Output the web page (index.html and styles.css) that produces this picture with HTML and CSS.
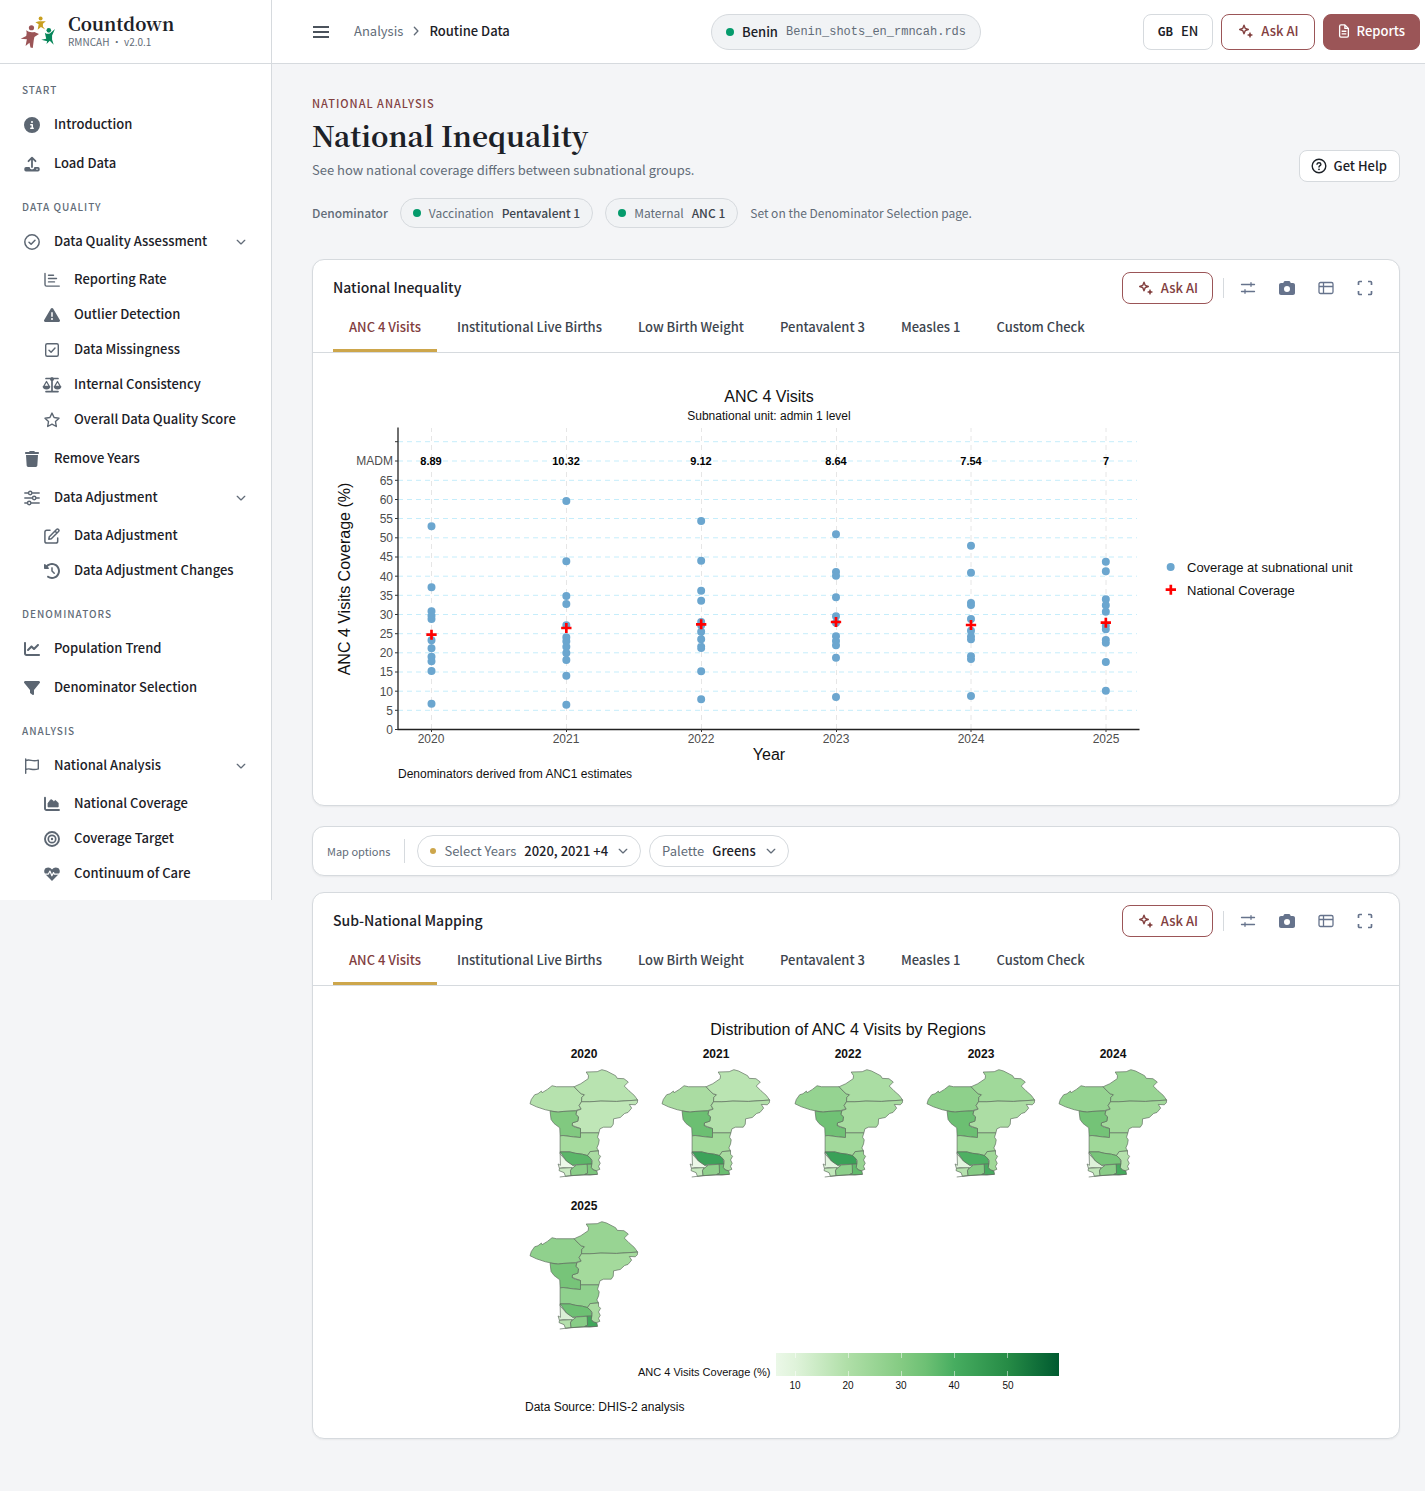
FILE: index.html
```html
<!DOCTYPE html>
<html lang="en">
<head>
<meta charset="utf-8">
<meta name="viewport" content="width=device-width, initial-scale=1">
<title>Countdown – National Inequality</title>
<link rel="stylesheet" href="styles.css">
</head>
<body>

<!-- Icon sprite -->
<svg class="sprite" aria-hidden="true">
  <symbol id="i-info" viewBox="0 0 512 512"><path d="M256 512A256 256 0 1 0 256 0a256 256 0 1 0 0 512zM216 336h24V272H216c-13.3 0-24-10.7-24-24s10.7-24 24-24h48c13.3 0 24 10.7 24 24v88h8c13.3 0 24 10.7 24 24s-10.7 24-24 24H216c-13.3 0-24-10.7-24-24s10.7-24 24-24zm40-208a32 32 0 1 1 0 64 32 32 0 1 1 0-64z"/></symbol>
  <symbol id="i-upload" viewBox="0 0 16 16"><path d="M2 11h3.6a2.4 2.4 0 0 0 4.8 0H14a1.7 1.7 0 0 1 1.7 1.7v1A1.7 1.7 0 0 1 14 15.400H2a1.700 1.700 0 0 1-1.700-1.700v-1A1.700 1.700 0 0 1 2 11z"/><path d="M8 11V2M4.500 5.200L8 1.700l3.500 3.500" fill="none" stroke="currentColor" stroke-width="1.800" stroke-linecap="round" stroke-linejoin="round"/><circle cx="13" cy="13.200" r=".7" fill="#fff"/></symbol>
  <symbol id="i-check-circle" viewBox="0 0 16 16"><g fill="none" stroke="currentColor" stroke-width="1.500" stroke-linecap="round" stroke-linejoin="round"><circle cx="8" cy="8" r="7.200"/><path d="M5 8.200l2.100 2.100L11 6.200"/></g></symbol>
  <symbol id="i-bars-chart" viewBox="0 0 16 16"><path d="M1 1.500v11a1.600 1.600 0 0 0 1.600 1.600H15.300M4.500 3.200h5M4.500 6.500h8M4.500 9.900h6" fill="none" stroke="currentColor" stroke-width="1.400" stroke-linecap="round"/></symbol>
  <symbol id="i-warn" viewBox="0 0 512 512"><path d="M256 32c14.200 0 27.300 7.500 34.500 19.800l216 368c7.300 12.400 7.300 27.700 .2 40.100S486.300 480 472 480H40c-14.300 0-27.600-7.700-34.700-20.100s-7-27.800 .2-40.100l216-368C228.700 39.500 241.800 32 256 32zm0 128c-13.300 0-24 10.700-24 24V296c0 13.300 10.700 24 24 24s24-10.700 24-24V184c0-13.300-10.700-24-24-24zm32 224a32 32 0 1 0 -64 0 32 32 0 1 0 64 0z"/></symbol>
  <symbol id="i-check-square" viewBox="0 0 16 16"><g fill="none" stroke="currentColor" stroke-width="1.400" stroke-linecap="round" stroke-linejoin="round"><rect x="1.700" y="1.700" width="12.600" height="12.600" rx="1.500"/><path d="M5 8.200l2.100 2.100L11 6"/></g></symbol>
  <symbol id="i-scale" viewBox="0 0 20 16"><path d="M4 1.500h12M10 1v13.500M4 14.600h12" fill="none" stroke="currentColor" stroke-width="1.700" stroke-linecap="round"/><circle cx="10" cy="2.200" r="1.900"/><path d="M4.500 4.500L1.600 9.500h5.800zM15.500 4.500l-2.900 5h5.800z" fill="none" stroke="currentColor" stroke-width="1.300" stroke-linejoin="round"/><path d="M.6 9.300h7.800a3.900 3.100 0 0 1-7.800 0zM11.600 9.300h7.800a3.900 3.100 0 0 1-7.800 0z"/></symbol>
  <symbol id="i-star" viewBox="0 0 16 16"><path d="M8 1.100l2.100 4.400 4.900.7-3.500 3.400.8 4.900L8 12.200l-4.300 2.300.8-4.900L1 6.200l4.900-.7z" fill="none" stroke="currentColor" stroke-width="1.400" stroke-linejoin="round"/></symbol>
  <symbol id="i-trash" viewBox="-32 0 512 512"><path d="M135.200 17.700L128 32H32C14.300 32 0 46.300 0 64S14.300 96 32 96H416c17.700 0 32-14.300 32-32s-14.300-32-32-32H320l-7.200-14.300C307.400 6.800 296.300 0 284.200 0H163.800c-12.100 0-23.200 6.800-28.600 17.700zM416 128H32L53.200 467c1.600 25.300 22.600 45 47.900 45H346.900c25.300 0 46.300-19.700 47.900-45L416 128z"/></symbol>
  <symbol id="i-sliders" viewBox="0 0 16 16"><g fill="none" stroke="currentColor" stroke-width="1.400" stroke-linecap="round"><path d="M.8 3h3.400M8.200 3h7M.8 8h7.400M12.200 8h3M.8 13h2.400M7.200 13h8"/><circle cx="6.200" cy="3" r="1.700"/><circle cx="10.200" cy="8" r="1.700"/><circle cx="5.200" cy="13" r="1.700"/></g></symbol>
  <symbol id="i-edit" viewBox="0 0 16 16"><g fill="none" stroke="currentColor" stroke-width="1.500" stroke-linecap="round" stroke-linejoin="round"><path d="M6 2.300H2.800A1.900 1.900 0 0 0 .9 4.200v9a1.900 1.900 0 0 0 1.900 1.900h9a1.900 1.900 0 0 0 1.900-1.900V10"/><path d="M5.300 8.700L12.500 1.500a1.400 1.400 0 0 1 2 2L7.300 10.700l-2.500.5zM11 3l2 2"/></g></symbol>
  <symbol id="i-history" viewBox="0 0 512 512"><path d="M75 75L41 41C25.900 25.900 0 36.600 0 57.900V168c0 13.300 10.700 24 24 24H134.100c21.400 0 32.100-25.900 17-41l-30.800-30.800C155 85.500 203 64 256 64c106 0 192 86 192 192s-86 192-192 192c-40.800 0-78.600-12.700-109.700-34.400c-14.500-10.100-34.400-6.600-44.600 7.900s-6.600 34.400 7.900 44.600C151.200 495 201.700 512 256 512c141.400 0 256-114.600 256-256S397.400 0 256 0C185.300 0 121.300 28.700 75 75zm181 53c-13.300 0-24 10.700-24 24V256c0 6.400 2.500 12.500 7 17l72 72c9.400 9.400 24.600 9.400 33.900 0s9.400-24.600 0-33.900l-65-65V152c0-13.300-10.700-24-24-24z"/></symbol>
  <symbol id="i-trend" viewBox="0 0 512 512"><path d="M64 64c0-17.700-14.300-32-32-32S0 46.300 0 64V400c0 44.200 35.800 80 80 80H480c17.700 0 32-14.300 32-32s-14.300-32-32-32H80c-8.800 0-16-7.200-16-16V64zm406.600 86.600c12.500-12.500 12.500-32.800 0-45.300s-32.800-12.500-45.300 0L320 210.700l-57.400-57.400c-12.500-12.500-32.800-12.500-45.300 0l-112 112c-12.500 12.500-12.500 32.800 0 45.300s32.800 12.500 45.300 0L240 221.300l57.400 57.400c12.500 12.500 32.800 12.500 45.300 0l128-128z"/></symbol>
  <symbol id="i-filter" viewBox="0 0 512 512"><path d="M3.900 54.900C10.500 40.900 24.500 32 40 32H472c15.500 0 29.500 8.900 36.100 22.900s4.600 30.500-5.200 42.500L320 320.900V448c0 12.100-6.800 23.200-17.700 28.600s-23.800 4.300-33.500-3l-64-48c-8.100-6-12.800-15.500-12.800-25.600V320.900L9 97.300C-.7 85.400-2.800 68.800 3.900 54.900z"/></symbol>
  <symbol id="i-flag" viewBox="0 0 16 16"><path d="M1.700 1v14.300M1.700 2.600c4.500-2 6.300 1.500 12.600-.5v8.800c-6.300 2.200-8.100-1.500-12.600.6" fill="none" stroke="currentColor" stroke-width="1.400" stroke-linecap="round" stroke-linejoin="round"/></symbol>
  <symbol id="i-area" viewBox="0 0 16 16"><path d="M1 1.800v10.700A1.500 1.500 0 0 0 2.500 14H15" fill="none" stroke="currentColor" stroke-width="1.900" stroke-linecap="round"/><path d="M4 10.900V7.300l2.600-3.500 1.500.1 1.700 1.700 1.800-1.200 2.600 2.600v3.900z" stroke="currentColor" stroke-width=".8" stroke-linejoin="round"/></symbol>
  <symbol id="i-target" viewBox="0 0 16 16"><g fill="none" stroke="currentColor"><circle cx="8" cy="8" r="7" stroke-width="1.900"/><circle cx="8" cy="8" r="3.700" stroke-width="1.700"/></g><circle cx="8" cy="8" r="1.200"/></symbol>
  <symbol id="i-heart" viewBox="0 0 16 16"><path d="M8 14.900L1.600 8.600C-.4 6.500-.2 3.300 2 2c2-1.200 4.500-.6 6 1.500C9.500 1.400 12 .8 14 2c2.200 1.300 2.400 4.500.4 6.600z"/><path d="M0 8.100h4.400l1.500-3 2 4.700 1.600-3.200.8 1.500H16" fill="none" stroke="#fff" stroke-width="1.200" stroke-linejoin="round"/></symbol>
  <symbol id="i-chevron" viewBox="0 0 12 12"><path d="M1.500 4L6 8.300 10.500 4" fill="none" stroke="currentColor" stroke-width="1.600" stroke-linecap="round" stroke-linejoin="round"/></symbol>
  <symbol id="i-menu" viewBox="0 0 18 14"><path d="M1 2h16M1 7h16M1 12h16" stroke="currentColor" stroke-width="1.900"/></symbol>
  <symbol id="i-spark" viewBox="0 0 16 16"><path d="M6 2.200l1.200 3.100 3.100 1.200-3.100 1.200L6 10.800 4.800 7.700 1.700 6.500l3.100-1.200z" fill="none" stroke="currentColor" stroke-width="1.400" stroke-linejoin="round"/><path d="M12 8.800l1 2.200 2.200 1-2.200 1-1 2.200-1-2.200-2.200-1 2.200-1z"/></symbol>
  <symbol id="i-doc" viewBox="0 0 12 16"><path d="M1 2.500A1.500 1.500 0 0 1 2.500 1H7l4 4v8.500a1.500 1.500 0 0 1-1.500 1.500h-7A1.500 1.500 0 0 1 1 13.500zM7 1v4h4M3.300 8.300h5.400M3.300 11.300h5.400" fill="none" stroke="currentColor" stroke-width="1.500" stroke-linejoin="round"/></symbol>
  <symbol id="i-help" viewBox="0 0 16 16"><g fill="none" stroke="currentColor" stroke-width="1.400" stroke-linecap="round"><circle cx="8" cy="8" r="6.800"/><path d="M6 6.200C6.300 4.300 9.900 4.300 9.900 6.400 9.900 7.700 8 7.700 8 9"/></g><circle cx="8" cy="11.300" r=".9"/></symbol>
  <symbol id="i-tune" viewBox="0 0 16 16"><path d="M1.500 4.500h13M11 2.700v3.600M1.500 11.500h13M5 9.700v3.600" fill="none" stroke="currentColor" stroke-width="1.300" stroke-linecap="round"/></symbol>
  <symbol id="i-camera" viewBox="0 0 512 512"><path d="M149.100 64.800L138.700 96H64C28.700 96 0 124.700 0 160V416c0 35.300 28.700 64 64 64H448c35.300 0 64-28.700 64-64V160c0-35.300-28.700-64-64-64H373.300L362.900 64.800C356.400 45.200 338.100 32 317.400 32H194.600c-20.700 0-39 13.200-45.500 32.800zM256 192a96 96 0 1 1 0 192 96 96 0 1 1 0-192z"/></symbol>
  <symbol id="i-table" viewBox="0 0 16 16"><path d="M2.500 2.500h11a1.500 1.500 0 0 1 1.500 1.500v8a1.500 1.500 0 0 1-1.500 1.500h-11A1.500 1.500 0 0 1 1 12V4a1.500 1.500 0 0 1 1.500-1.500zM1 6.500h14M5.500 2.500v11" fill="none" stroke="currentColor" stroke-width="1.300"/></symbol>
  <symbol id="i-expand" viewBox="0 0 16 16"><path d="M1.500 5V2.500a1 1 0 0 1 1-1H5M11 1.500h2.500a1 1 0 0 1 1 1V5M14.500 11v2.500a1 1 0 0 1-1 1H11M5 14.500H2.500a1 1 0 0 1-1-1V11" fill="none" stroke="currentColor" stroke-width="1.700"/></symbol>

  <!-- Benin departments, filled from the custom properties of the year -->
  <symbol id="benin" viewBox="55 80 335 335">
    <g stroke="#5c6b5c" stroke-width="2" stroke-linejoin="round">
      <path fill="var(--atacora)" d="M61 190L65 177 75 163 85 160 95 152 97 157 113 147 127 136 140 139 193 139 205 152 214 160 224 163 216 171 215 184 208 195 214 206 206 207 197 211 160 213 145 215 127 212 107 208 80 199z"/>
      <path fill="var(--alibori)" d="M193 139L213 130 235 115 236 106 229 95 262 94 276 88 290 92 317 106 322 114 342 115 355 125 343 137 357 151 373 165 378 172 383 179 320 183 273 182 240 184 215 184 216 171 224 163 214 160 205 152z"/>
      <path fill="var(--borgou)" d="M215 184L240 184 273 182 320 183 383 179 382 187 376 193 358 192 365 203 354 216 344 219 331 231 311 235 310 251 304 260 281 260 270 265 267 277 212 277 212 264 196 258 187 255 188 247 204 242 206 229 198 222 201 211 214 206 208 195z"/>
      <path fill="var(--donga)" d="M121 212L145 215 160 213 201 211 198 222 206 229 204 242 188 247 187 255 196 260 212 264 212 291 190 289 160 285 151 286 150 262 133 249 124 237z"/>
      <path fill="var(--collines)" d="M151 286L160 285 190 289 212 291 212 277 267 277 263 290 268 298 266 310 261 322 266 331 241 333 233 345 218 341 196 338 180 334 151 334z"/>
      <path fill="var(--plateau)" d="M241 333L266 331 266 341 272 347 266 358 271 368 266 377 270 386 260 390 250 388 244 380 247 360 233 345z"/>
      <path fill="var(--couffo)" d="M151 334L151 340 170 361 189 374 200 374 194 380 187 383 160 381 149 383 145 370 152 374z"/>
      <path fill="var(--zou)" d="M151 334L180 334 196 338 218 341 233 345 244 355 246 370 200 372 189 374 170 361z"/>
      <path fill="var(--mono)" d="M149 383L187 381 182 390 184 405 167 407 163 396 148 390z"/>
      <path fill="var(--atlantique)" d="M187 383L200 373 232 371 235 385 233 398 226 400 224 402 184 405 182 390z"/>
      <path fill="var(--oueme)" d="M232 371L246 371 244 380 250 388 261 391 263 401 240 403 224 402 233 398z"/>
      <path fill="none" d="M150 409L184 405 224 403 263 401"/>
    </g>
  </symbol>
</svg>

<aside class="sidebar">
  <div class="brand">
    <svg class="brand-logo" viewBox="60 45 110 100" aria-hidden="true">
      <g fill="#9b5557"><circle cx="95" cy="82" r="8"/><path d="M79 90Q89 98 104 95L118 101 104 110 102 120 99 144 92 142 89 128 77 138 81 117 62 116 79 107Q82 99 79 90z"/></g>
      <g fill="#c9a020"><circle cx="123" cy="54" r="6"/><path d="M107 65L118 62 128 62 139 62 130 70 130 78 137 87 124 80 114 88 117 71z"/></g>
      <g fill="#07865a"><circle cx="148" cy="90" r="7"/><path d="M136 97Q144 103 152 99L167 86 158 106 158 118 163 134 151 122 141 132 143 123 125 119 140 116z"/></g>
    </svg>
    <div class="brand-text">
      <div class="brand-name">Countdown</div>
      <div class="brand-sub">RMNCAH · v2.0.1</div>
    </div>
  </div>
  <nav class="nav" aria-label="Main">
    <h2 class="nav-label">START</h2>
    <a class="nav-item" href="#"><svg class="icon"><use href="#i-info"/></svg><span>Introduction</span></a>
    <a class="nav-item" href="#"><svg class="icon"><use href="#i-upload"/></svg><span>Load Data</span></a>
    <h2 class="nav-label">DATA QUALITY</h2>
    <button class="nav-item" type="button" aria-expanded="true"><svg class="icon"><use href="#i-check-circle"/></svg><span>Data Quality Assessment</span><svg class="chevron"><use href="#i-chevron"/></svg></button>
    <div class="subnav">
      <a class="nav-item" href="#"><svg class="icon"><use href="#i-bars-chart"/></svg><span>Reporting Rate</span></a>
      <a class="nav-item" href="#"><svg class="icon"><use href="#i-warn"/></svg><span>Outlier Detection</span></a>
      <a class="nav-item" href="#"><svg class="icon"><use href="#i-check-square"/></svg><span>Data Missingness</span></a>
      <a class="nav-item" href="#"><svg class="icon icon-wide"><use href="#i-scale"/></svg><span>Internal Consistency</span></a>
      <a class="nav-item" href="#"><svg class="icon"><use href="#i-star"/></svg><span>Overall Data Quality Score</span></a>
    </div>
    <a class="nav-item" href="#"><svg class="icon"><use href="#i-trash"/></svg><span>Remove Years</span></a>
    <button class="nav-item" type="button" aria-expanded="true"><svg class="icon"><use href="#i-sliders"/></svg><span>Data Adjustment</span><svg class="chevron"><use href="#i-chevron"/></svg></button>
    <div class="subnav">
      <a class="nav-item" href="#"><svg class="icon"><use href="#i-edit"/></svg><span>Data Adjustment</span></a>
      <a class="nav-item" href="#"><svg class="icon"><use href="#i-history"/></svg><span>Data Adjustment Changes</span></a>
    </div>
    <h2 class="nav-label">DENOMINATORS</h2>
    <a class="nav-item" href="#"><svg class="icon"><use href="#i-trend"/></svg><span>Population Trend</span></a>
    <a class="nav-item" href="#"><svg class="icon"><use href="#i-filter"/></svg><span>Denominator Selection</span></a>
    <h2 class="nav-label">ANALYSIS</h2>
    <button class="nav-item" type="button" aria-expanded="true"><svg class="icon"><use href="#i-flag"/></svg><span>National Analysis</span><svg class="chevron"><use href="#i-chevron"/></svg></button>
    <div class="subnav">
      <a class="nav-item" href="#"><svg class="icon"><use href="#i-area"/></svg><span>National Coverage</span></a>
      <a class="nav-item" href="#"><svg class="icon"><use href="#i-target"/></svg><span>Coverage Target</span></a>
      <a class="nav-item" href="#"><svg class="icon"><use href="#i-heart"/></svg><span>Continuum of Care</span></a>
    </div>
  </nav>
</aside>

<div class="page">
  <header class="topbar">
    <div class="topbar-left">
      <button class="menu-btn" type="button" aria-label="Toggle menu"><svg><use href="#i-menu"/></svg></button>
      <nav class="crumbs" aria-label="Breadcrumb"><a href="#">Analysis</a><svg class="crumb-sep"><use href="#i-chevron"/></svg><strong>Routine Data</strong></nav>
    </div>
    <div class="dataset"><span class="dot"></span><strong>Benin</strong><span class="file">Benin_shots_en_rmncah.rds</span></div>
    <div class="topbar-right">
      <button class="btn" type="button"><span class="flag">GB</span>EN</button>
      <button class="btn btn-ai" type="button"><svg class="icon"><use href="#i-spark"/></svg>Ask AI</button>
      <button class="btn btn-solid" type="button"><svg class="icon icon-doc"><use href="#i-doc"/></svg>Reports</button>
    </div>
  </header>

  <main class="content">
    <div class="page-head">
      <div>
        <p class="eyebrow">NATIONAL ANALYSIS</p>
        <h1>National Inequality</h1>
        <p class="lead">See how national coverage differs between subnational groups.</p>
      </div>
      <button class="btn btn-help" type="button"><svg class="icon"><use href="#i-help"/></svg>Get Help</button>
    </div>
    <div class="denoms">
      <strong>Denominator</strong>
      <span class="chip"><span class="dot"></span>Vaccination <b>Pentavalent 1</b></span>
      <span class="chip"><span class="dot"></span>Maternal <b>ANC 1</b></span>
      <span>Set on the Denominator Selection page.</span>
    </div>

    <section class="card">
      <div class="card-head">
        <h2>National Inequality</h2>
        <div class="tools">
          <button class="btn btn-ai btn-small" type="button"><svg class="icon"><use href="#i-spark"/></svg>Ask AI</button>
          <span class="rule"></span>
          <button class="tool" type="button" aria-label="Settings"><svg><use href="#i-tune"/></svg></button>
          <button class="tool" type="button" aria-label="Download image"><svg><use href="#i-camera"/></svg></button>
          <button class="tool" type="button" aria-label="Show table"><svg><use href="#i-table"/></svg></button>
          <button class="tool" type="button" aria-label="Full screen"><svg><use href="#i-expand"/></svg></button>
        </div>
      </div>
      <div class="tabs" role="tablist">
        <button role="tab" aria-selected="true">ANC 4 Visits</button>
        <button role="tab" aria-selected="false">Institutional Live Births</button>
        <button role="tab" aria-selected="false">Low Birth Weight</button>
        <button role="tab" aria-selected="false">Pentavalent 3</button>
        <button role="tab" aria-selected="false">Measles 1</button>
        <button role="tab" aria-selected="false">Custom Check</button>
      </div>
      <svg class="plot" viewBox="313 353 1086 452" role="img" aria-label="ANC 4 Visits coverage by year">
        <g class="mid">
          <text class="t16" x="769" y="402">ANC 4 Visits</text>
          <text class="t12" x="769" y="420">Subnational unit: admin 1 level</text>
          <text class="t16" x="769" y="760">Year</text>
          <text class="t16" transform="translate(350 579) rotate(-90)">ANC 4 Visits Coverage (%)</text>
        </g>
        <path class="grid-h" d="M398 710.300H1137M398 691.200H1137M398 672H1137M398 652.800H1137M398 633.700H1137M398 614.500H1137M398 595.300H1137M398 576.200H1137M398 557H1137M398 537.800H1137M398 518.500H1137M398 499.500H1137M398 480.300H1137M398 461H1137M398 441.700H1137"/>
        <path class="grid-v" d="M431.500 729V428M566.500 729V428M701.500 729V428M836.500 729V428M971 729V428M1106 729V428"/>
        <path class="axis" d="M398 427.500V729.500H1139.500"/>
        <path class="ticks" d="M395 729.500h3M395 710.300h3M395 691.200h3M395 672h3M395 652.800h3M395 633.700h3M395 614.500h3M395 595.300h3M395 576.200h3M395 557h3M395 537.800h3M395 518.500h3M395 499.500h3M395 480.300h3M395 461h3M395 441.700h3M431.500 729v3M566.500 729v3M701.500 729v3M836.500 729v3M971 729v3M1106 729v3"/>
        <g class="tick-y t12">
          <text x="393" y="734">0</text><text x="393" y="715">5</text><text x="393" y="696">10</text><text x="393" y="676">15</text><text x="393" y="657">20</text><text x="393" y="638">25</text><text x="393" y="619">30</text><text x="393" y="600">35</text><text x="393" y="581">40</text><text x="393" y="561">45</text><text x="393" y="542">50</text><text x="393" y="523">55</text><text x="393" y="504">60</text><text x="393" y="485">65</text><text x="393" y="465">MADM</text>
        </g>
        <g class="mid tick-x t12">
          <text x="431" y="743">2020</text><text x="566" y="743">2021</text><text x="701" y="743">2022</text><text x="836" y="743">2023</text><text x="971" y="743">2024</text><text x="1106" y="743">2025</text>
        </g>
        <g class="mid madm">
          <text x="431" y="465">8.89</text><text x="566" y="465">10.32</text><text x="701" y="465">9.12</text><text x="836" y="465">8.64</text><text x="971" y="465">7.54</text><text x="1106" y="465">7</text>
        </g>
        <g transform="translate(320 370) scale(.33333)">
          <path class="dots" d="M334.500 469h0m0 183h0m0 72h0m0 13h0m0 10h0m0 64h0m0 24h0m0 25h0m0 14h0m0 29h0m0 98h0
            M739 393h0m0 181h0m0 104h0m0 24h0m0 64h0m0 36h0m0 12h0m0 16h0m0 19h0m0 21h0m0 47h0m0 87h0
            M1143.500 453h0m0 119h0m0 90h0m0 30h0m0 64h0m0 10h0m0 19h0m0 23h0m0 22h0m0 4h0m0 70h0m0 84h0
            M1548 493h0m0 113h0m0 11h0m0 65h0m0 57h0m0 19h0m0 41h0m0 14h0m0 13h0m0 37h0m0 118h0
            M1953 527h0m0 81h0m0 91h0m0 6h0m0 42h0m0 35h0m0 18h0m0 8h0m0 51h0m0 8h0m0 111h0
            M2357.500 575h0m0 29h0m0 84h0m0 18h0m0 19h0m0 43h0m0 10h0m0 32h0m0 8h0m0 58h0m0 86h0"/>
          <path class="national" d="M319 794h31m-15.500-15v30M723.500 774h31m-15.500-15v30M1128 763h31m-15.500-15v30M1532.500 756h31m-15.500-15v30M1937.500 765h31m-15.500-15v30M2342 758h31m-15.500-15v30"/>
          <path class="dots" d="M2552 591h0"/>
          <path class="national" d="M2537 659h31m-15.500-15v30"/>
        </g>
        <text class="t13" x="1187" y="572">Coverage at subnational unit</text>
        <text class="t13" x="1187" y="595">National Coverage</text>
        <text class="t12" x="398" y="778">Denominators derived from ANC1 estimates</text>
      </svg>
    </section>

    <div class="options">
      <span class="options-label">Map options</span>
      <span class="rule"></span>
      <button class="picker" type="button" aria-haspopup="listbox"><span class="dot dot-gold"></span>Select Years <b>2020, 2021 +4</b><svg class="chevron"><use href="#i-chevron"/></svg></button>
      <label class="picker">Palette
        <select><option>Greens</option><option>Blues</option><option>Reds</option></select>
        <svg class="chevron"><use href="#i-chevron"/></svg>
      </label>
    </div>

    <section class="card">
      <div class="card-head">
        <h2>Sub-National Mapping</h2>
        <div class="tools">
          <button class="btn btn-ai btn-small" type="button"><svg class="icon"><use href="#i-spark"/></svg>Ask AI</button>
          <span class="rule"></span>
          <button class="tool" type="button" aria-label="Settings"><svg><use href="#i-tune"/></svg></button>
          <button class="tool" type="button" aria-label="Download image"><svg><use href="#i-camera"/></svg></button>
          <button class="tool" type="button" aria-label="Show table"><svg><use href="#i-table"/></svg></button>
          <button class="tool" type="button" aria-label="Full screen"><svg><use href="#i-expand"/></svg></button>
        </div>
      </div>
      <div class="tabs" role="tablist">
        <button role="tab" aria-selected="true">ANC 4 Visits</button>
        <button role="tab" aria-selected="false">Institutional Live Births</button>
        <button role="tab" aria-selected="false">Low Birth Weight</button>
        <button role="tab" aria-selected="false">Pentavalent 3</button>
        <button role="tab" aria-selected="false">Measles 1</button>
        <button role="tab" aria-selected="false">Custom Check</button>
      </div>
      <svg class="plot" viewBox="313 986 1086 452" role="img" aria-label="Distribution of ANC 4 Visits by Regions">
        <defs>
          <linearGradient id="greens">
            <stop offset="0" stop-color="#ebf8e8"/><stop offset=".07" stop-color="#dff3da"/><stop offset=".25" stop-color="#b0dfa8"/><stop offset=".44" stop-color="#85cb83"/><stop offset=".53" stop-color="#6dc074"/><stop offset=".63" stop-color="#47ad60"/><stop offset=".82" stop-color="#268b46"/><stop offset="1" stop-color="#005a30"/>
          </linearGradient>
        </defs>
        <text class="t16 mid" x="848" y="1035">Distribution of ANC 4 Visits by Regions</text>
        <g class="mid facet">
          <text x="584" y="1058">2020</text><text x="716" y="1058">2021</text><text x="848" y="1058">2022</text><text x="981" y="1058">2023</text><text x="1113" y="1058">2024</text><text x="584" y="1210">2025</text>
        </g>
        <use class="y2020" href="#benin" x="528" y="1067" width="112" height="112"/>
        <use class="y2021" href="#benin" x="660" y="1067" width="112" height="112"/>
        <use class="y2022" href="#benin" x="793" y="1067" width="112" height="112"/>
        <use class="y2023" href="#benin" x="925" y="1067" width="112" height="112"/>
        <use class="y2024" href="#benin" x="1057" y="1067" width="112" height="112"/>
        <use class="y2025" href="#benin" x="528" y="1219" width="112" height="112"/>
        <rect x="776" y="1353" width="283" height="23" fill="url(#greens)"/>
        <path class="scale-ticks" d="M795.500 1353v5m0 13v5M848.500 1353v5m0 13v5M901.500 1353v5m0 13v5M954.500 1353v5m0 13v5M1007.500 1353v5m0 13v5"/>
        <text class="t11" x="638" y="1376">ANC 4 Visits Coverage (%)</text>
        <g class="mid t10">
          <text x="795" y="1389">10</text><text x="848" y="1389">20</text><text x="901" y="1389">30</text><text x="954" y="1389">40</text><text x="1008" y="1389">50</text>
        </g>
        <text class="t12" x="525" y="1411">Data Source: DHIS-2 analysis</text>
      </svg>
    </section>
  </main>
</div>
</body>
</html>
```
FILE: styles.css
```css
:root {
  --ink: #1c2127;
  --body: #3d454e;
  --muted: #626c78;
  --line: #d6dade;
  --bg: #f4f5f7;
  --brand: #9b5557;
  --brand-ink: #82403f;
  --gold: #cda64b;
  --green: #059b6c;
}

* { box-sizing: border-box; }

body {
  margin: 0;
  display: flex;
  align-items: flex-start;
  background: var(--bg);
  color: var(--ink);
  font-family: "Noto Sans CJK SC", "Noto Sans", sans-serif;
  font-size: 13px;
  line-height: 20px;
}

h1, h2, p { margin: 0; }
button, select { font: inherit; color: inherit; cursor: pointer; }
a { color: inherit; text-decoration: none; }
svg { fill: currentColor; flex: none; }
.sprite { position: absolute; width: 0; height: 0; }
.icon { width: 16px; height: 16px; }
.chevron { width: 10px; height: 10px; color: var(--muted); }

/* Sidebar */
.sidebar {
  flex: none;
  width: 272px;
  background: #fff;
  border-right: 1px solid var(--line);
}
.brand {
  display: flex;
  align-items: center;
  gap: 12px;
  height: 64px;
  padding: 0 20px;
  border-bottom: 1px solid var(--line);
}
.brand-logo { width: 36px; height: 34px; }
.brand-text { padding-bottom: 4px; }
.brand-name {
  font: 700 18px/24px "Noto Serif CJK SC", "Source Serif 4", "Liberation Serif", serif;
}
.brand-sub { font-size: 10px; line-height: 14px; color: var(--muted); }

.nav {
  display: flex;
  flex-direction: column;
  gap: 1px;
  padding: 2px 10px 8px;
}
.nav-label {
  padding: 17px 12px 7px;
  font-size: 10px;
  line-height: 14px;
  font-weight: 500;
  letter-spacing: 1px;
  color: var(--muted);
}
.nav-item {
  display: flex;
  align-items: center;
  gap: 14px;
  height: 38px;
  padding: 1px 15px 0 14px;
  border: 0;
  background: none;
  text-align: left;
  font-weight: 500;
}
.nav-item > span { flex: 1; padding-bottom: 1px; white-space: nowrap; }
.nav-item .icon { color: #5c6672; }
.subnav {
  display: flex;
  flex-direction: column;
  gap: 1px;
  padding: 1px 0 2px 20px;
}
.subnav .nav-item { height: 34px; }
.icon-wide { width: 20px; margin: 0 -2px; }

/* Top bar */
.page { flex: 1; min-width: 0; }
.topbar {
  display: grid;
  grid-template-columns: 1fr auto 1fr;
  align-items: center;
  height: 64px;
  padding-right: 5px;
  background: #fff;
  border-bottom: 1px solid var(--line);
}
.topbar-left { display: flex; align-items: center; gap: 24px; padding-left: 40px; }
.menu-btn { display: flex; padding: 0; border: 0; background: none; color: #4b535c; }
.menu-btn svg { width: 18px; height: 14px; }
.crumbs { display: flex; align-items: center; gap: 8px; padding-bottom: 1px; color: var(--muted); }
.crumbs strong { color: var(--ink); font-weight: 500; }
.crumb-sep { width: 10px; height: 10px; transform: rotate(-90deg); }
.dataset {
  display: flex;
  align-items: center;
  gap: 8px;
  height: 36px;
  padding: 0 14px;
  border: 1px solid var(--line);
  border-radius: 18px;
  background: #f1f3f5;
}
.dataset strong { font-weight: 500; }
.file { font-family: "Liberation Mono", monospace; font-size: 12px; color: var(--muted); }
.dot { width: 8px; height: 8px; border-radius: 50%; background: var(--green); }
.dot-gold { width: 6px; height: 6px; background: var(--gold); }
.topbar-right { display: flex; justify-content: flex-end; gap: 8px; }

.btn {
  display: flex;
  align-items: center;
  gap: 8px;
  height: 36px;
  padding: 0 14px 1px;
  border: 1px solid var(--line);
  border-radius: 8px;
  background: #fff;
  font-weight: 500;
  white-space: nowrap;
}
.btn .icon { width: 16px; height: 16px; }
.btn-ai { gap: 7px; padding: 0 15px 1px 16px; border-color: var(--brand); color: var(--brand-ink); }
.btn-solid { background: var(--brand); border-color: var(--brand); color: #fff; gap: 7px; }
.btn .icon-doc { width: 12px; height: 14px; }
.btn-small { height: 32px; padding: 0 14px 1px 15px; }
.btn-help { height: 32px; gap: 7px; padding: 0 12px 1px 11px; }
.flag { font-size: 11px; font-weight: 700; }

/* Page heading */
.content { padding: 32px 25px 52px 40px; }
.page-head { display: flex; align-items: flex-end; justify-content: space-between; }
.eyebrow {
  font-size: 11px;
  line-height: 14px;
  font-weight: 500;
  letter-spacing: 1px;
  color: var(--brand-ink);
}
h1 {
  margin-top: 5px;
  font: 700 28px/40px "Noto Serif CJK SC", "Source Serif 4", "Liberation Serif", serif;
}
.lead { margin-top: 3px; line-height: 24px; color: var(--muted); }
.denoms {
  display: flex;
  align-items: center;
  gap: 12px;
  margin: 16px 0 31px;
  font-size: 12px;
  color: var(--muted);
}
.denoms strong { font-weight: 500; }
.chip {
  display: flex;
  align-items: center;
  gap: 8px;
  height: 30px;
  padding: 0 12px;
  border: 1px solid var(--line);
  border-radius: 15px;
  background: #f1f3f5;
}
.chip b { font-weight: 500; color: var(--body); }

/* Cards */
.card {
  overflow: hidden;
  background: #fff;
  border: 1px solid var(--line);
  border-radius: 12px;
  box-shadow: 0 1px 2px rgba(28, 33, 39, .06);
}
.card-head {
  display: flex;
  align-items: center;
  justify-content: space-between;
  padding: 12px 16px 0 20px;
}
.card-head h2 { padding-bottom: 2px; font-size: 14px; line-height: 20px; font-weight: 500; }
.tools { display: flex; align-items: center; gap: 3px; }
.rule { width: 1px; height: 20px; margin: 0 3px 0 7px; background: var(--line); }
.tool {
  display: flex;
  align-items: center;
  justify-content: center;
  width: 36px;
  height: 32px;
  padding: 0;
  border: 0;
  background: none;
  color: #66738c;
}
.tool svg { width: 16px; height: 16px; }
.tabs {
  display: flex;
  gap: 4px;
  padding: 0 20px;
  border-bottom: 1px solid var(--line);
}
.tabs button {
  height: 48px;
  padding: 0 16px;
  border: 0;
  border-bottom: 3px solid transparent;
  background: none;
  font-weight: 500;
  color: var(--body);
  white-space: nowrap;
}
.tabs [aria-selected="true"] { color: var(--brand-ink); border-color: var(--gold); }

/* Map options */
.options {
  display: flex;
  align-items: center;
  gap: 8px;
  height: 50px;
  margin: 20px 0 16px;
  padding: 0 14px;
  background: #fff;
  border: 1px solid var(--line);
  border-radius: 12px;
  box-shadow: 0 1px 2px rgba(28, 33, 39, .06);
  color: var(--muted);
}
.options-label { font-size: 11px; }
.options .rule { height: 24px; margin: 0 4px 0 6px; }
.picker {
  display: flex;
  align-items: center;
  gap: 8px;
  height: 32px;
  padding: 0 12px;
  border: 1px solid var(--line);
  border-radius: 16px;
  background: #fff;
  color: var(--muted);
}
.picker b { font-weight: 500; color: var(--ink); }
.picker .chevron { margin-left: 2px; }
.picker select {
  appearance: none;
  padding: 0;
  border: 0;
  background: none;
  font-weight: 500;
  color: var(--ink);
}

/* Plots */
.plot {
  display: block;
  width: 100%;
  height: auto;
  font-family: "Liberation Sans", Arial, sans-serif;
  fill: #111;
}
.mid { text-anchor: middle; }
.t10 { font-size: 10px; }
.t11 { font-size: 11px; }
.t12 { font-size: 12px; }
.t13 { font-size: 13px; }
.t16 { font-size: 16px; }
.facet { font-size: 12px; font-weight: 700; }
.madm { font-size: 11px; font-weight: 700; fill: #000; }
.tick-y { text-anchor: end; fill: #4d4d4d; }
.tick-x { fill: #4d4d4d; }
.grid-h { stroke: #c5edfb; stroke-dasharray: 5 4; }
.grid-v { stroke: #e6e6e6; stroke-dasharray: 5 4; }
.axis { fill: none; stroke: #222; stroke-width: 1.3px; }
.ticks { stroke: #333; }
.dots { fill: none; stroke: #6ba6cf; stroke-width: 24px; stroke-linecap: round; }
.national { fill: none; stroke: #f00; stroke-width: 8px; }
.scale-ticks { fill: none; stroke: #fff; stroke-opacity: .5; }

/* Department fills for each year */
.y2020 { --alibori: #b8e3b0; --atacora: #b6e2ae; --borgou: #bfe6b7; --donga: #81c980; --collines: #a5db9d; --zou: #5cb769; --couffo: #ecf8e8; --mono: #c9eac2; --atlantique: #8ace88; --oueme: #7cc67c; --plateau: #a9dca2; }
.y2021 { --alibori: #bae4b2; --atacora: #aadca2; --borgou: #b2e0aa; --donga: #6cbf72; --collines: #a3da9b; --zou: #3da35a; --couffo: #ebf7e7; --mono: #c6e9bf; --atlantique: #8fd08c; --oueme: #6bbf71; --plateau: #a8dba0; }
.y2022 { --alibori: #aadda3; --atacora: #95d391; --borgou: #a8dca0; --donga: #70c175; --collines: #a2d99b; --zou: #3aa158; --couffo: #e3f4df; --mono: #c2e8bb; --atlantique: #8ccf8a; --oueme: #62bb6c; --plateau: #97d492; }
.y2023 { --alibori: #a0d99a; --atacora: #8ed08b; --borgou: #acdda4; --donga: #6cbf72; --collines: #9fd898; --zou: #4eb063; --couffo: #e2f4de; --mono: #b5e1ad; --atlantique: #85cb84; --oueme: #48ab60; --plateau: #a0d898; }
.y2024 { --alibori: #99d594; --atacora: #95d391; --borgou: #a2d99b; --donga: #74c377; --collines: #9fd898; --zou: #78c57a; --couffo: #def2da; --mono: #c0e6b9; --atlantique: #8acd88; --oueme: #45aa5d; --plateau: #b5e1ad; }
.y2025 { --alibori: #98d493; --atacora: #90d18d; --borgou: #a4da9c; --donga: #77c479; --collines: #90d18e; --zou: #6dc073; --couffo: #daf0d6; --mono: #b4e0ac; --atlantique: #88cd87; --oueme: #40a75b; --plateau: #a8dba0; }
```
